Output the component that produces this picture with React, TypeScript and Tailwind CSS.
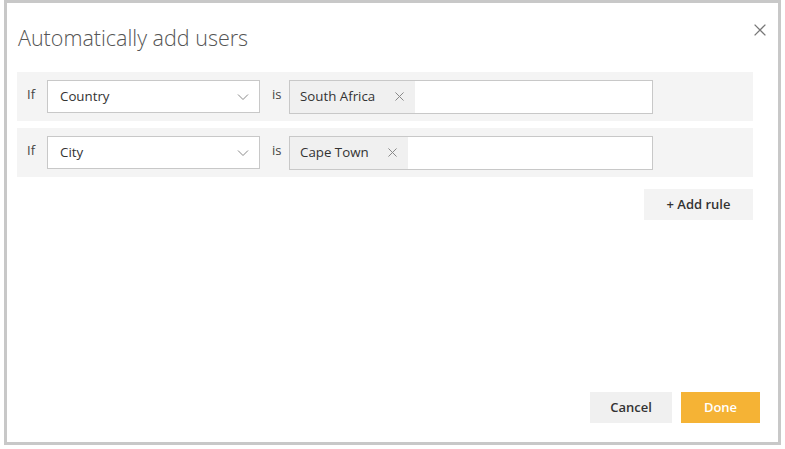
import React from 'react';

const font = { fontFamily: '"Open Sans", "Noto Sans", sans-serif' };

const Chevron = () => (
  <svg width="12" height="8" viewBox="0 0 12 8" fill="none" className="text-[#8a8a8a]">
    <path d="M1 1.5 L6 6.5 L11 1.5" stroke="currentColor" strokeWidth="1" />
  </svg>
);

const Cross = ({ size = 9, className = '' }: { size?: number; className?: string }) => (
  <svg width={size} height={size} viewBox="0 0 10 10" fill="none" className={className}>
    <path d="M0.5 0.5 L9.5 9.5 M9.5 0.5 L0.5 9.5" stroke="currentColor" strokeWidth="1.1" />
  </svg>
);

const RuleRow = ({ field, value, chipWidth }: { field: string; value: string; chipWidth: string }) => (
  <div className="flex items-center h-[49px] w-[736px] bg-[#f4f4f4] pl-[10px]">
    <span className="w-[20px] -mt-[3px] text-[13px] text-[#444]">If</span>
    <div className="flex items-center justify-between w-[213px] h-[33px] bg-white border border-[#c8c8c8] pl-[12px] pr-[10px]">
      <span className="text-[13.3px] text-[#333]">{field}</span>
      <Chevron />
    </div>
    <span className="w-[29px] -mt-[3px] pl-[12px] text-[13px] text-[#444]">is</span>
    <div className="flex items-stretch w-[364px] h-[34px] bg-white border border-[#c8c8c8]">
      <div className={`flex items-center justify-between bg-[#f0f0f0] pl-[10px] pr-[11px] ${chipWidth}`}>
        <span className="text-[13.3px] text-[#333]">{value}</span>
        <Cross size={9} className="text-[#888]" />
      </div>
    </div>
  </div>
);

export default function App() {
  return (
    <div className="w-[785px] h-[449px] bg-white" style={font}>
      <div className="ml-[4px] w-[777px] h-[445px] border-[3px] border-[#c8c8c8] flex flex-col">
        <div className="flex justify-between h-[69px] pl-[11px] pr-[12px]">
          <h1 className="pt-[20px] text-[21.5px] leading-[30px] font-light text-[#555]">Automatically add users</h1>
          <div className="pt-[21px] text-[#777]">
            <Cross size={12} />
          </div>
        </div>
        <div className="flex flex-col gap-[7px] pl-[10px]">
          <RuleRow field="Country" value="South Africa" chipWidth="w-[125px]" />
          <RuleRow field="City" value="Cape Town" chipWidth="w-[118px]" />
        </div>
        <div className="flex justify-end w-[746px] mt-[12px]">
          <button className="w-[109px] h-[31px] bg-[#f3f3f3] text-[13px] font-semibold text-[#333]">+ Add rule</button>
        </div>
        <div className="flex-1" />
        <div className="flex justify-end gap-[9px] pr-[18px] pb-[19px]">
          <button className="w-[82px] h-[31px] bg-[#f0f0f0] text-[13px] font-semibold text-[#333]">Cancel</button>
          <button className="w-[79px] h-[31px] bg-[#f5b335] text-[13px] font-semibold text-white">Done</button>
        </div>
      </div>
    </div>
  );
}
